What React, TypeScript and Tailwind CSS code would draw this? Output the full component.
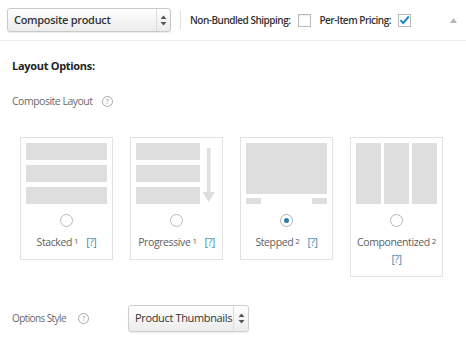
import React from "react";

const font = { fontFamily: '"Open Sans", "Liberation Sans", sans-serif' };

const SelectArrows = () => (
  <svg width="7" height="11" viewBox="0 0 7 11" className="text-[#555]">
    <polygon points="3.5,0.5 6.5,4 0.5,4" fill="currentColor" />
    <polygon points="0.5,7 6.5,7 3.5,10.5" fill="currentColor" />
  </svg>
);

const Help = () => (
  <span className="inline-flex items-center justify-center w-[11px] h-[11px] rounded-full border border-[#a8a8a8] text-[7px] leading-none text-[#999]">
    ?
  </span>
);

const Radio = ({ checked }: { checked?: boolean }) => (
  <span
    className={
      "flex items-center justify-center w-[13px] h-[13px] rounded-full border bg-white mx-auto " +
      (checked ? "border-[#9bb8c8]" : "border-[#b8b8b8]")
    }
  >
    {checked && <span className="w-[5px] h-[5px] rounded-full bg-[#2a7fa8]" />}
  </span>
);

const Label = ({ name, sup, wrap }: { name: string; sup: string; wrap?: boolean }) => (
  <div className="mt-[7px] text-center text-[10.5px] leading-[17px] text-[#5e5e5e] tracking-[-0.4px] whitespace-nowrap">
    {name}
    <span className="text-[8px] relative top-[-2px] ml-[2px]">{sup}</span>
    {wrap ? <br /> : <span className="inline-block w-[8px]" />}
    <span className="text-[#3b8ab0]">[?]</span>
  </div>
);

const Card = ({ children, checked, name, sup, wrap }: {
  children: React.ReactNode; checked?: boolean; name: string; sup: string; wrap?: boolean;
}) => (
  <div className="w-[93px] border border-[#e2e2e2] bg-white px-[5px] pt-[5px] pb-[8px]">
    <div className="h-[61px]">{children}</div>
    <div className="mt-[10px]">
      <Radio checked={checked} />
    </div>
    <Label name={name} sup={sup} wrap={wrap} />
  </div>
);

const bar = "bg-[#dedede]";

export default function App() {
  return (
    <div className="w-[466px] h-[350px] bg-white text-[#333] overflow-hidden whitespace-nowrap" style={font}>
      <div className="h-[41px] border-b border-[#ececec] flex items-center pl-[7px] pr-[9px]">
        <div className="w-[164px] h-[24px] flex items-stretch rounded-[3px] border border-[#c9c9c9] bg-gradient-to-b from-white to-[#ececec] shadow-[0_1px_1px_rgba(0,0,0,0.08)]">
          <div className="flex-1 flex items-center pl-[6px] text-[11px] tracking-[-0.3px] font-semibold text-[#333]">
            Composite product
          </div>
          <div className="w-[14px] border-l border-[#dcdcdc] flex items-center justify-center">
            <SelectArrows />
          </div>
        </div>
        <div className="ml-[9px] w-px h-[18px] bg-[#e0e0e0]" />
        <span className="ml-[9px] text-[10px] tracking-[-0.5px] font-semibold text-[#333]">Non-Bundled Shipping:</span>
        <span className="ml-[8px] w-[13px] h-[13px] border border-[#b9b9b9] bg-white shadow-[inset_0_1px_2px_rgba(0,0,0,0.08)]" />
        <span className="ml-[8px] text-[10px] tracking-[-0.5px] font-semibold text-[#333]">Per-Item Pricing:</span>
        <span className="ml-[7px] w-[13px] h-[13px] border border-[#b9b9b9] bg-white flex items-center justify-center">
          <svg width="11" height="10" viewBox="0 0 11 10">
            <path d="M1.5 5.2 L4.2 8 L9.8 1.5" fill="none" stroke="#1e8cbe" strokeWidth="2" />
          </svg>
        </span>
        <span className="ml-auto">
          <svg width="7" height="5" viewBox="0 0 7 5">
            <polygon points="3.5,0 7,5 0,5" fill="#b5b5b5" />
          </svg>
        </span>
      </div>

      <div className="px-[12px]">
        <div className="mt-[17px] text-[11px] tracking-[-0.3px] leading-[16px] font-bold text-[#222]">Layout Options:</div>
        <div className="mt-[19px] flex items-center gap-[9px] text-[10.5px] tracking-[-0.5px] leading-[16px] text-[#6a6a6a]">
          Composite Layout <Help />
        </div>

        <div className="mt-[28px] ml-[8px] flex items-start gap-[17px]">
          <Card name="Stacked" sup="1">
            <div className="flex flex-col gap-[5px]">
              <div className={bar + " h-[17px]"} />
              <div className={bar + " h-[17px]"} />
              <div className={bar + " h-[17px]"} />
            </div>
          </Card>
          <Card name="Progressive" sup="1">
            <div className="flex">
              <div className="w-[64px] flex flex-col gap-[5px]">
                <div className={bar + " h-[17px]"} />
                <div className={bar + " h-[17px]"} />
                <div className={bar + " h-[17px]"} />
              </div>
              <svg width="17" height="61" viewBox="0 0 17 61">
                <rect x="7" y="5" width="3.5" height="46" fill="#dedede" />
                <polygon points="2.5,49 15,49 8.75,59" fill="#dedede" />
              </svg>
            </div>
          </Card>
          <Card name="Stepped" sup="2" checked>
            <div className={bar + " h-[51px]"} />
            <div className="mt-[4px] flex justify-between">
              <div className={bar + " w-[15px] h-[6px]"} />
              <div className={bar + " w-[15px] h-[6px]"} />
            </div>
          </Card>
          <Card name="Componentized" sup="2" wrap>
            <div className="flex gap-[3px] h-[61px]">
              <div className={bar + " flex-1"} />
              <div className={bar + " flex-1"} />
              <div className={bar + " flex-1"} />
            </div>
          </Card>
        </div>

        <div className="mt-[28px] flex items-center">
          <div className="w-[116px] flex items-center gap-[12px] text-[10px] tracking-[-0.6px] text-[#6a6a6a]">
            Options Style <Help />
          </div>
          <div className="w-[121px] h-[27px] flex items-stretch rounded-[3px] border border-[#cfcfcf] bg-gradient-to-b from-white to-[#ececec] shadow-[0_1px_1px_rgba(0,0,0,0.08)]">
            <div className="flex-1 flex items-center pl-[6px] text-[11px] tracking-[-0.35px] text-[#333]">Product Thumbnails</div>
            <div className="w-[15px] border-l border-[#dcdcdc] flex items-center justify-center">
              <SelectArrows />
            </div>
          </div>
        </div>
      </div>
    </div>
  );
}
